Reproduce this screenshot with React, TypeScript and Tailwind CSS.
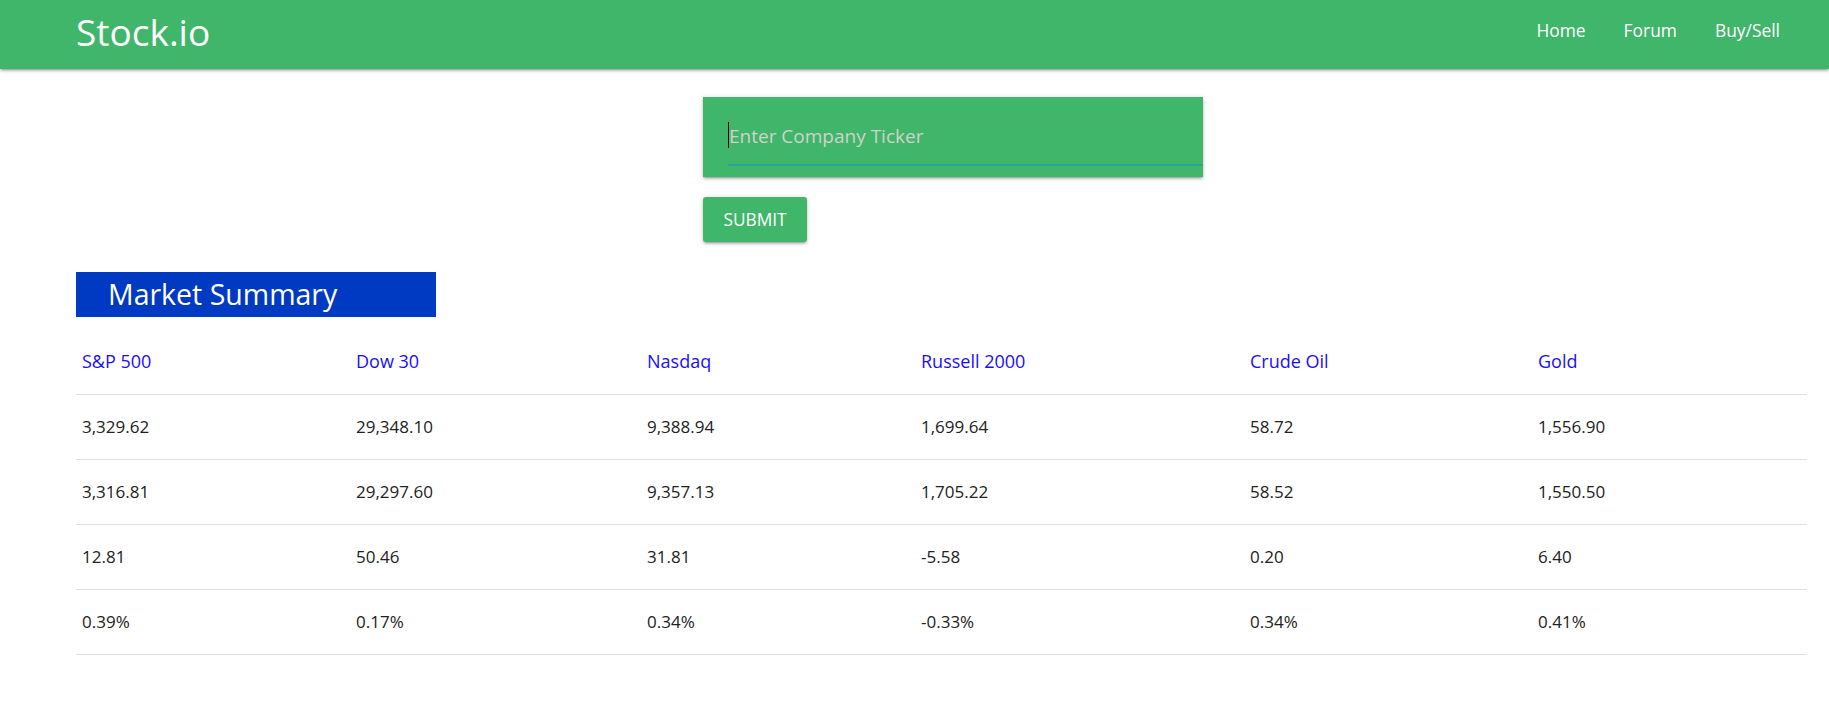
import React from "react";

const headers = ["S&P 500", "Dow 30", "Nasdaq", "Russell 2000", "Crude Oil", "Gold"];
const rows = [
  ["3,329.62", "29,348.10", "9,388.94", "1,699.64", "58.72", "1,556.90"],
  ["3,316.81", "29,297.60", "9,357.13", "1,705.22", "58.52", "1,550.50"],
  ["12.81", "50.46", "31.81", "-5.58", "0.20", "6.40"],
  ["0.39%", "0.17%", "0.34%", "-0.33%", "0.34%", "0.41%"],
];
const widths = ["w-[274px]", "w-[291px]", "w-[274px]", "w-[329px]", "w-[288px]", "w-[275px]"];

export default function App() {
  return (
    <div className="min-h-screen bg-white font-['Open_Sans','Noto_Sans',sans-serif]">
      <nav className="h-[69px] bg-[#40b66a] flex items-center justify-between pl-[76px] pr-[49px] pb-[9px] shadow-[0_2px_2px_0_rgba(0,0,0,0.14),0_3px_1px_-2px_rgba(0,0,0,0.12),0_1px_5px_0_rgba(0,0,0,0.2)]">
        <span className="text-white text-[37px] leading-none pt-[2px]">Stock.io</span>
        <ul className="flex gap-[38px] text-white text-[17.4px]">
          <li>Home</li>
          <li>Forum</li>
          <li>Buy/Sell</li>
        </ul>
      </nav>
      <main className="pl-[76px]">
        <div className="pl-[627px] pt-[28px]">
          <div className="w-[500px] h-[80px] bg-[#40b66a] pl-[25px] pt-[24px] shadow-[0_2px_2px_0_rgba(0,0,0,0.14),0_3px_1px_-2px_rgba(0,0,0,0.12),0_1px_5px_0_rgba(0,0,0,0.2)]">
            <div className="h-[45px] border-b-2 border-[#26a69a] flex items-start">
              <span className="w-px h-[26px] mt-[1px] bg-black" />
              <span className="text-[19px] text-[#cfd2ca] leading-[30px]">Enter Company Ticker</span>
            </div>
          </div>
          <button className="mt-[20px] w-[104px] h-[45px] bg-[#40b66a] rounded-[3px] text-white text-[17.3px] shadow-[0_2px_2px_0_rgba(0,0,0,0.14),0_3px_1px_-2px_rgba(0,0,0,0.12),0_1px_5px_0_rgba(0,0,0,0.2)]">
            SUBMIT
          </button>
        </div>
        <div className="mt-[30px] w-[360px] h-[45px] bg-[#0039c2] pl-[32px] flex items-center">
          <span className="text-white text-[28.5px] leading-none">Market Summary</span>
        </div>
        <table className="mt-[12px] w-[1731px] table-fixed border-collapse text-[17px]">
          <colgroup>
            {widths.map((w, i) => (
              <col key={i} className={w} />
            ))}
          </colgroup>
          <thead>
            <tr className="border-b border-[#e0e0e0] h-[65px]">
              {headers.map((h) => (
                <th key={h} className="text-left font-normal text-[18px] text-[#1a0dff] px-[6px]">
                  {h}
                </th>
              ))}
            </tr>
          </thead>
          <tbody>
            {rows.map((r, i) => (
              <tr key={i} className="border-b border-[#e0e0e0] h-[65px]">
                {r.map((c, j) => (
                  <td key={j} className="text-left text-[#222] px-[6px]">
                    {c}
                  </td>
                ))}
              </tr>
            ))}
          </tbody>
        </table>
      </main>
    </div>
  );
}
